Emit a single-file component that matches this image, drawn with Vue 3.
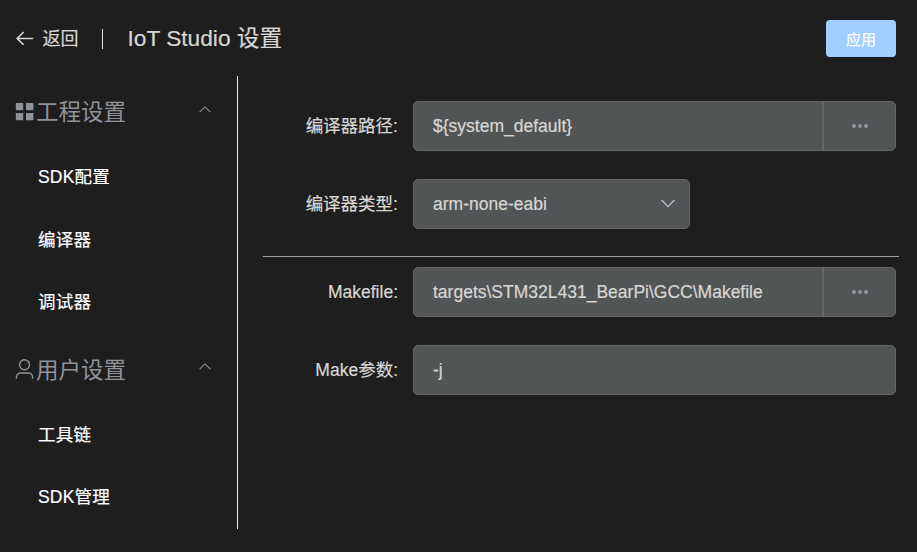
<script setup>
import { ref } from 'vue'

const groups = [
  { key: 'project', title: '工程设置', items: ['SDK配置', '编译器', '调试器'] },
  { key: 'user', title: '用户设置', items: ['工具链', 'SDK管理'] },
]
const compilerPath = ref('${system_default}')
const compilerType = ref('arm-none-eabi')
const makefile = ref('targets\\STM32L431_BearPi\\GCC\\Makefile')
const makeArgs = ref('-j')
</script>

<template>
  <div class="page">
    <header class="header">
      <svg class="back-icon" width="18" height="14" viewBox="0 0 18 14">
        <path d="M17.200 7.500H1.200M7.700 1L1.100 7.500l6.600 6.300" />
      </svg>
      <span class="back">返回</span>
      <span class="bar"></span>
      <h1 class="title">IoT Studio 设置</h1>
      <button class="apply">应用</button>
    </header>
    <div class="body">
      <nav class="menu">
        <section v-for="g in groups" :key="g.key" class="group">
          <div class="group-title">
            <svg v-if="g.key === 'project'" class="grid-icon" width="20" height="20" viewBox="0 0 20 20">
              <path d="M.8 2h7.400v7.200H.8zM11 2h7.400v7.200H11zM.8 12h7.400v7.200H.8zM11 12h7.400v7.200H11z" />
            </svg>
            <svg v-else class="user-icon" width="20" height="20" viewBox="0 0 20 20">
              <circle cx="9.500" cy="5.700" r="5" />
              <path d="M1.400 19.800v-1.600a4.200 4.200 0 0 1 4.200-4.200h7.800a4.200 4.200 0 0 1 4.200 4.200v1.600" />
            </svg>
            <span class="group-name">{{ g.title }}</span>
            <svg class="caret" width="12" height="7" viewBox="0 0 12 7">
              <path d="M.6 6.100L6 .9l5.400 5.200" />
            </svg>
          </div>
          <div v-for="item in g.items" :key="item" class="item">{{ item }}</div>
        </section>
      </nav>
      <main class="form">
        <div class="row">
          <label>编译器路径:</label>
          <div class="field">
            <span class="value">{{ compilerPath }}</span>
            <span class="more"><i></i><i></i><i></i></span>
          </div>
        </div>
        <div class="row">
          <label>编译器类型:</label>
          <div class="field select">
            <span class="value">{{ compilerType }}</span>
            <svg class="down" width="14" height="9" viewBox="0 0 14 9">
              <path d="M.7 1L7 7.600 13.300 1" />
            </svg>
          </div>
        </div>
        <div class="divider"></div>
        <div class="row">
          <label>Makefile:</label>
          <div class="field">
            <span class="value">{{ makefile }}</span>
            <span class="more"><i></i><i></i><i></i></span>
          </div>
        </div>
        <div class="row">
          <label>Make参数:</label>
          <div class="field"><span class="value">{{ makeArgs }}</span></div>
        </div>
      </main>
    </div>
  </div>
</template>

<style>
body {
  background: #1e1e1e;
}
</style>

<style scoped>
.page {
  width: 917px;
  height: 552px;
  overflow: hidden;
  box-sizing: border-box;
  background: #1e1e1e;
  color: #d9d6d3;
  font-family: "Liberation Sans", "Noto Sans CJK SC", sans-serif;
  font-size: 17.5px;
  -webkit-text-stroke: 0.2px currentColor;
}
svg {
  fill: none;
  flex: none;
}
.header {
  display: flex;
  align-items: center;
  height: 76px;
  padding: 0 21px 0 16px;
  box-sizing: border-box;
}
.back-icon {
  stroke: #d9d6d3;
  stroke-width: 1.6;
}
.back {
  margin-left: 8.5px;
  padding-top: 2px;
  font-size: 18px;
  line-height: 24px;
}
.bar {
  width: 1px;
  height: 20px;
  margin: 2px 25px 0 23px;
  background: #dcdfe6;
}
.title {
  margin: 0;
  padding-top: 1px;
  font-size: 22.7px;
  font-weight: 400;
  line-height: 31px;
}
.apply {
  width: 70px;
  height: 37px;
  margin-left: auto;
  padding: 0;
  border: 0;
  border-radius: 4px;
  background: #a0cfff;
  color: #fff;
  font-family: inherit;
  font-size: 15px;
}
.body {
  display: flex;
}
.menu {
  width: 237px;
  height: 453px;
  border-right: 1px solid #f2f2f2;
}
.group-title {
  display: flex;
  align-items: center;
  height: 70px;
  padding: 0 26px 0 15px;
  color: #909399;
  font-size: 22.5px;
}
.group-name {
  padding: 4px 0 0 1px;
  line-height: 32px;
  -webkit-text-stroke-width: 0;
}
.grid-icon {
  fill: #909399;
}
.user-icon {
  stroke: #909399;
  stroke-width: 1.4;
}
.caret {
  margin: 0 0.5px 4px auto;
  stroke: #909399;
  stroke-width: 1.1;
}
.item {
  height: 62.5px;
  padding-left: 38px;
  color: #fff;
  line-height: 62.5px;
  letter-spacing: 0.2px;
}
.form {
  flex: 1;
  padding: 25px 18px 0 25px;
}
.row {
  display: flex;
  align-items: center;
  height: 50px;
  margin: 0 3px 28px 0;
}
label {
  width: 135px;
  height: 50px;
  margin-right: 15px;
  line-height: 51px;
  text-align: right;
}
.field {
  display: flex;
  flex: 1;
  align-items: center;
  height: 50px;
  box-sizing: border-box;
  border: 1px solid #666;
  border-radius: 5px;
  background: #515556;
}
.value {
  flex: 1;
  padding-left: 19px;
}
.more {
  display: flex;
  align-items: center;
  justify-content: center;
  gap: 2px;
  width: 71px;
  height: 48px;
  border-left: 2px solid #666;
}
.more i {
  width: 4px;
  height: 4px;
  margin-bottom: 1px;
  border-radius: 50%;
  background: #909399;
}
.select {
  flex: none;
  width: 277px;
}
.down {
  margin: 0 14px 1px 0;
  stroke: #c0c4cc;
  stroke-width: 1.3;
}
.divider {
  height: 1px;
  margin: -1px 0 10px;
  background: #a3a3a3;
}
</style>
